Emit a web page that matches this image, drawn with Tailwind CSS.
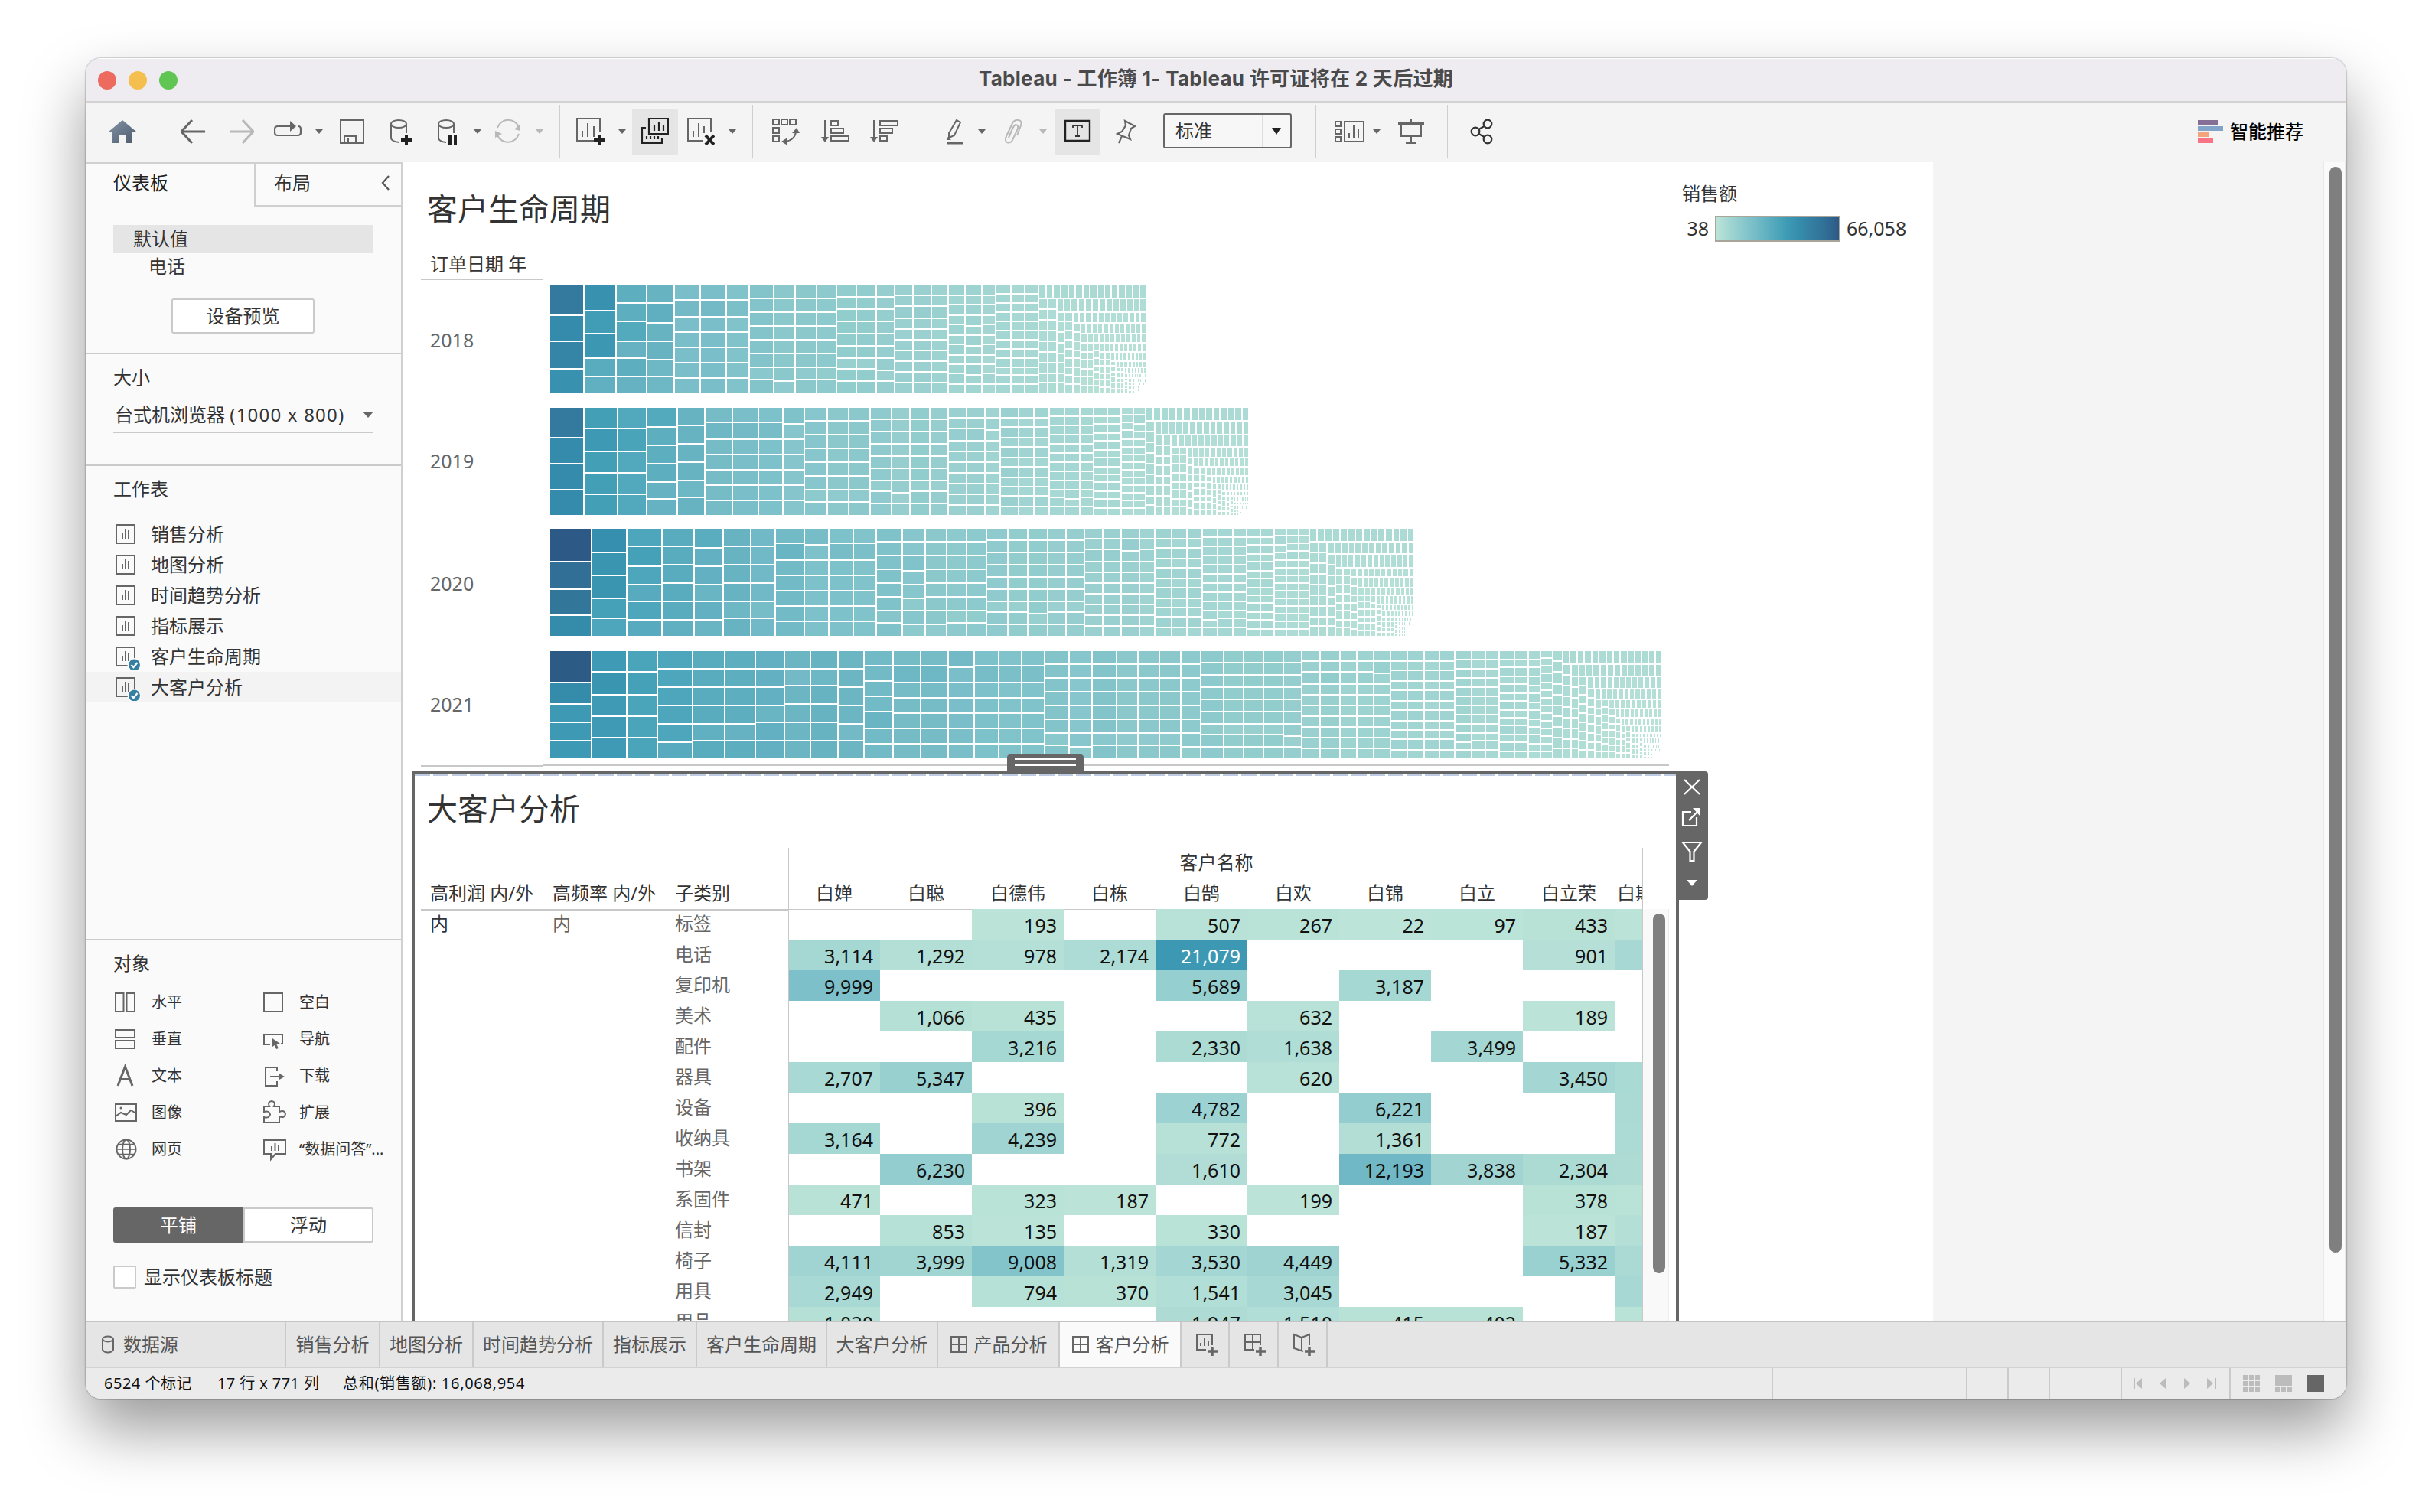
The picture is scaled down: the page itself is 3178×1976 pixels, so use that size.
<!DOCTYPE html>
<html lang="zh-CN">
<head>
<meta charset="utf-8">
<title>Tableau - 工作簿 1</title>
<script src="https://cdn.jsdelivr.net/npm/@tailwindcss/browser@4"></script>
</head>
<body class="bg-white w-[3178px] h-[1976px] overflow-hidden pt-[76px] pl-[112px] font-['Noto_Sans','Noto_Sans_CJK_SC',sans-serif] text-[24px] leading-[36px] text-[#333] whitespace-nowrap">
<div class="w-[2954px] h-[1752px] rounded-[20px] overflow-hidden flex flex-col bg-[#f4f4f4] shadow-[0_0_2px_rgba(0,0,0,0.6),0_40px_80px_rgba(0,0,0,0.4)]">

  <!-- Title bar -->
  <header class="h-[58px] shrink-0 bg-[#eeecf1] border-b-2 border-[#d2d2d2] border-t border-t-white flex items-center relative pl-4 gap-4">
    <span class="size-6 rounded-full bg-[#ec6a5e]"></span>
    <span class="size-6 rounded-full bg-[#f4bf4f]"></span>
    <span class="size-6 rounded-full bg-[#61c554]"></span>
    <h1 class="absolute inset-x-0 top-[8px] text-center font-bold text-[26px] tracking-[0.300px] text-[#4a4a4a] font-['Inter','Noto_Sans_CJK_SC',sans-serif]">Tableau - 工作簿 1- Tableau 许可证将在 2 天后过期</h1>
  </header>

  <!-- Toolbar -->
  <nav class="h-[78px] pb-[2px] shrink-0 flex items-center [&>svg]:shrink-0">
    <svg class="ml-[30px] w-[36px] h-[36px]" viewBox="142 154 36 36"><defs><linearGradient id="hm" x1="0" y1="0" x2="1" y2="1"><stop offset="0" stop-color="#8494a6"/><stop offset="1" stop-color="#4c5b6e"/></linearGradient></defs><path d="M160 157L178 172H173V187H164V176H156V187H147V172H142Z" fill="url(#hm)"/></svg>
    <i class="ml-[28px] w-px h-[70px] bg-[#cfcfcf]"></i>
    <svg class="ml-[29px] w-[32px] h-[36px]" viewBox="236 154 32 36"><path d="M251 157L237 172L251 187M237 172H268" fill="none" stroke="#666" stroke-width="3"/></svg>
    <svg class="ml-[32px] w-[32px] h-[36px]" viewBox="300 154 32 36"><path d="M317 157L331 172L317 187M331 172H300" fill="none" stroke="#b8b8b8" stroke-width="3"/></svg>
    <svg class="ml-[26px] w-[36px] h-[36px]" viewBox="358 154 36 36"><path d="M366 165H363Q359 165 359 169V173Q359 177 363 177H389Q393 177 393 173V169Q393 165 390 165M366 165H380" fill="none" stroke="#666" stroke-width="2.2"/><path d="M379 158L387 165L379 172Z" fill="#666"/></svg>
    <svg class="ml-[17px] w-[12px] h-[36px]" viewBox="0 0 12 36"><path d="M1 15H11L6 21Z" fill="#666"/></svg>
    <svg class="ml-[21px] w-[32px] h-[36px]" viewBox="444 154 32 36"><path d="M445 157H475V187H445ZM450 187V178H465V187M455 181V187" fill="none" stroke="#666" stroke-width="2"/></svg>
    <svg class="ml-[34px] w-[30px] h-[36px]" viewBox="510 154 30 36"><ellipse cx="521" cy="162" rx="10" ry="5" fill="none" stroke="#666" stroke-width="2"/><path d="M511 162V181Q512 185 522 186M531 162V174" fill="none" stroke="#666" stroke-width="2"/><path d="M531 176V190M524 183H539" stroke="#222" stroke-width="4"/></svg>
    <svg class="ml-[32px] w-[26px] h-[36px]" viewBox="572 154 26 36"><ellipse cx="583" cy="162" rx="10" ry="5" fill="none" stroke="#666" stroke-width="2"/><path d="M573 162V181Q574 185 583 186M593 162V174" fill="none" stroke="#666" stroke-width="2"/><path d="M588 177V190M595 177V190" stroke="#222" stroke-width="4"/></svg>
    <svg class="ml-[20px] w-[12px] h-[36px]" viewBox="0 0 12 36"><path d="M1 15H11L6 21Z" fill="#666"/></svg>
    <svg class="ml-[17px] w-[34px] h-[36px]" viewBox="647 154 34 36"><path d="M650 167A15 15 0 0 1 678 166M678 175A15 15 0 0 1 650 177" fill="none" stroke="#b8b8b8" stroke-width="2"/><path d="M680 162V171L672 169ZM647 180V171L656 175Z" fill="#b8b8b8"/></svg>
    <svg class="ml-[18px] w-[12px] h-[36px]" viewBox="0 0 12 36"><path d="M1 15H11L6 21Z" fill="#b8b8b8"/></svg>
    <i class="ml-[20px] w-px h-[70px] bg-[#cfcfcf]"></i>
    <svg class="ml-[21px] w-[38px] h-[36px]" viewBox="753 154 38 36"><path d="M776 184H754V155H784V173M761 179V171M768 179V161M776 179V165" fill="none" stroke="#666" stroke-width="2"/><path d="M783 176V190M776 183H790" stroke="#222" stroke-width="4"/></svg>
    <svg class="ml-[16px] w-[12px] h-[36px]" viewBox="0 0 12 36"><path d="M1 15H11L6 21Z" fill="#666"/></svg>
    <span class="ml-[7px] w-[60px] h-[60px] bg-[#e5e5e5] flex items-center justify-center shrink-0"><svg class="w-[36px] h-[36px]" viewBox="838 154 36 36"><path d="M848 155H873V175H848ZM855 171V164M861 171V159M867 171V163M844 167H839V187H865V180M845 182V178M850 182V178M855 182V178M860 182V178" fill="none" stroke="#222" stroke-width="2.2"/></svg></span>
    <svg class="ml-[12px] w-[36px] h-[36px]" viewBox="898 154 36 36"><path d="M918 184H899V155H929V172M906 179V171M913 179V161M920 174V165" fill="none" stroke="#666" stroke-width="2"/><path d="M922 177L933 189M933 177L922 189" stroke="#222" stroke-width="4"/></svg>
    <svg class="ml-[17px] w-[12px] h-[36px]" viewBox="0 0 12 36"><path d="M1 15H11L6 21Z" fill="#666"/></svg>
    <i class="ml-[20px] w-px h-[70px] bg-[#cfcfcf]"></i>
    <svg class="ml-[25px] w-[36px] h-[36px]" viewBox="1009 154 36 36"><path d="M1010 156H1018V163H1010ZM1021 156H1029V163H1021ZM1032 156H1040V163H1032ZM1010 167H1018V174H1010ZM1010 178H1018V185H1010ZM1026 185Q1039 183 1040 172" fill="none" stroke="#666" stroke-width="2"/><path d="M1035 174L1041 167L1045 174ZM1029 180V190L1021 185Z" fill="#666"/></svg>
    <svg class="ml-[28px] w-[38px] h-[36px]" viewBox="1073 154 38 36"><path d="M1078 157V180M1086 158H1095V164H1086ZM1086 168H1102V174H1086ZM1086 178H1109V184H1086Z" fill="none" stroke="#666" stroke-width="2"/><path d="M1073 179H1083L1078 186Z" fill="#666"/></svg>
    <svg class="ml-[26px] w-[38px] h-[36px]" viewBox="1137 154 38 36"><path d="M1142 157V180M1150 158H1173V164H1150ZM1150 168H1166V174H1150ZM1150 178H1159V184H1150Z" fill="none" stroke="#666" stroke-width="2"/><path d="M1137 179H1147L1142 186Z" fill="#666"/></svg>
    <i class="ml-[28px] w-px h-[70px] bg-[#cfcfcf]"></i>
    <svg class="ml-[32px] w-[24px] h-[36px]" viewBox="1236 154 24 36"><path d="M1250 157L1255 160L1247 177L1240 180V174Z" fill="none" stroke="#666" stroke-width="2"/><path d="M1237 187H1259" stroke="#666" stroke-width="3"/><path d="M1238 179L1243 183H1238Z" fill="#666"/></svg>
    <svg class="ml-[17px] w-[12px] h-[36px]" viewBox="0 0 12 36"><path d="M1 15H11L6 21Z" fill="#666"/></svg>
    <svg class="ml-[23px] w-[26px] h-[36px]" viewBox="1312 154 26 36"><path d="M1329 177L1334 164Q1336 158 1331 157Q1326 156 1323 161L1315 178Q1312 185 1317 186.500Q1322 187 1324 181L1330 168Q1331 163 1327 163Q1325 164 1323 168L1318 180" fill="none" stroke="#b8b8b8" stroke-width="2"/></svg>
    <svg class="ml-[19px] w-[12px] h-[36px]" viewBox="0 0 12 36"><path d="M1 15H11L6 21Z" fill="#b8b8b8"/></svg>
    <span class="ml-[9px] w-[60px] h-[60px] bg-[#e5e5e5] flex items-center justify-center shrink-0"><svg class="w-[36px] h-[36px]" viewBox="1390 154 36 36"><path d="M1392 158H1424V184H1392Z" fill="none" stroke="#222" stroke-width="2.4"/><path d="M1402 167V164H1414V167M1408 164V178M1405 178H1411" fill="none" stroke="#333" stroke-width="1.800"/></svg></span>
    <svg class="ml-[20px] w-[27px] h-[36px]" viewBox="1458 154 27 36"><path d="M1470 158L1483 165L1478 168L1475 177L1477 182L1460 175L1466 172L1471 164ZM1466 178L1462 187" fill="none" stroke="#666" stroke-width="2.200"/></svg>
    <button class="ml-[35px] w-[168px] h-[46px] mt-[-2px] border-2 border-[#666] rounded-[3px] bg-[#f7f7f7] flex items-center shrink-0 pl-[14px]"><span class="flex-1 text-left">标准</span><i class="w-px h-full bg-[#dedede]"></i><svg class="w-[36px] h-[36px]" viewBox="0 0 36 36"><path d="M12 14H24L18 23Z" fill="#222"/></svg></button>
    <i class="ml-[31px] w-px h-[70px] bg-[#cfcfcf]"></i>
    <svg class="ml-[24px] w-[39px] h-[36px]" viewBox="1744 154 39 36"><path d="M1745 159H1752V165H1745ZM1745 169H1752V175H1745ZM1745 179H1752V185H1745ZM1757 159H1782V185H1757ZM1763 180V174M1769 180V163M1775 180V168" fill="none" stroke="#666" stroke-width="2"/></svg>
    <svg class="ml-[10px] w-[12px] h-[36px]" viewBox="0 0 12 36"><path d="M1 15H11L6 21Z" fill="#666"/></svg>
    <svg class="ml-[21px] w-[36px] h-[36px]" viewBox="1826 154 36 36"><path d="M1844 156V160M1831 161V178H1857V161M1844 178V187M1837 187H1851" fill="none" stroke="#666" stroke-width="2"/><path d="M1827 161H1861" stroke="#666" stroke-width="4"/></svg>
    <i class="ml-[29px] w-px h-[70px] bg-[#cfcfcf]"></i>
    <svg class="ml-[29px] w-[30px] h-[36px]" viewBox="1921 154 30 36"><g fill="none" stroke="#333" stroke-width="2.200"><circle cx="1928" cy="172" r="5.300"/><circle cx="1944" cy="162" r="5.300"/><circle cx="1944" cy="182" r="5.300"/><path d="M1932.500 169L1939.500 165M1932.500 175L1939.500 179"/></g></svg>
    <svg class="ml-auto w-[33px] h-[30px]" viewBox="0 0 33 30"><path d="M0 0H26V6H0Z" fill="#866f96"/><path d="M0 8H33V14H0Z" fill="#82a4c9"/><path d="M0 16H14V22H0Z" fill="#f2a57a"/><path d="M0 24H20V30H0Z" fill="#f87383"/></svg>
    <span class="ml-[9px] mr-[56px] font-medium text-black">智能推荐</span>
  </nav>

  <!-- Workspace -->
  <main class="h-[1515px] shrink-0 flex overflow-hidden">
    <aside class="w-[414px] shrink-0 bg-[#fafafa] border-r-2 border-[#d0d0d0] border-t-2 flex flex-col">
      <div class="h-[56px] flex">
        <div class="w-[220px] pl-[36px] pt-[7px] text-[#222]">仪表板</div>
        <div class="flex-1 border-l-2 border-b-2 border-[#d0d0d0] pl-[24px] pt-[7px] pr-[3px] flex justify-between">布局<svg class="w-[36px] h-[36px]" viewBox="0 0 36 36"><path d="M23 9L15 18L23 27" fill="none" stroke="#555" stroke-width="2.200"/></svg></div>
      </div>
      <div class="mt-[24px] mx-[36px] h-[36px] bg-[#e5e5e5] pl-[26px]">默认值</div>
      <div class="h-[36px] pl-[82px]">电话</div>
      <button class="mt-[24px] ml-[112px] w-[187px] h-[46px] border-2 border-[#cacaca] rounded-[3px] bg-white leading-[40px]">设备预览</button>
      <section class="mt-[25px] border-t-2 border-[#cacaca] pt-[12px] px-[36px]">
        <h2>大小</h2>
        <div class="mt-[9px] h-[46px] border-b-2 border-[#cacaca] flex items-center justify-between pl-[2px]"><span>台式机浏览器 <span class="tracking-[1.200px]">(1000 x 800)</span></span><svg class="w-[14px] h-[8px]" viewBox="0 0 14 8"><path d="M0 0H14L7 8Z" fill="#666"/></svg></div>
      </section>
      <section class="mt-[41px] border-t-2 border-[#cacaca] pt-[12px]">
        <h2 class="pl-[36px]">工作表</h2>
        <ul id="sheets" class="mt-[21px]"></ul>
      </section>
      <section class="mt-[309px] border-t-2 border-[#cacaca] pt-[12px] px-[36px]">
        <h2>对象</h2>
        <div class="mt-[9px] grid grid-cols-[193px_1fr] auto-rows-[48px] text-[20px] items-center [&>div]:flex [&>div]:items-center [&>div]:gap-[14px] [&_svg]:w-[36px] [&_svg]:h-[36px] [&_svg]:shrink-0 [&_svg]:fill-none [&_svg]:stroke-[#666] [&_svg]:stroke-2">
          <div><svg viewBox="0 0 36 36"><rect x="3" y="6" width="10.500" height="24"/><rect x="17.500" y="6" width="10.500" height="24"/></svg>水平</div>
          <div><svg viewBox="0 0 36 36"><rect x="4" y="6" width="24" height="24"/></svg>空白</div>
          <div><svg viewBox="0 0 36 36"><rect x="3" y="6" width="25" height="10"/><rect x="3" y="20" width="25" height="10"/></svg>垂直</div>
          <div><svg viewBox="0 0 36 36"><path d="M12 25H4V12H28V24H26"/><path d="M15 17L25 24L20.500 25L23 30L20 31L18 26L15 28Z" fill="#666" stroke="none"/></svg>导航</div>
          <div><svg viewBox="0 0 36 36"><path d="M6 31L15.500 6L25 31M9 22.500H22" stroke-width="3"/></svg>文本</div>
          <div><svg viewBox="0 0 36 36"><path d="M21 12V7H6V31H21V25M12 19H26"/><path d="M24 15L31 19L24 23Z" fill="#666" stroke="none"/></svg>下载</div>
          <div><svg viewBox="0 0 36 36"><rect x="3" y="7" width="27" height="22"/><path d="M3 23L10 18L17 21L23 15L30 19"/><circle cx="10" cy="12" r="1.500" fill="#666" stroke="none"/></svg>图像</div>
          <div><svg viewBox="0 0 36 36"><path d="M4 17V10H11Q8 4 14 3Q20 4 17 10H24V17Q31 14 32 20Q31 26 24 23V31H4V24Q11 26 12 20.500Q11 15 4 17Z"/></svg>扩展</div>
          <div><svg viewBox="0 0 36 36"><circle cx="17" cy="18" r="12.500"/><ellipse cx="17" cy="18" rx="5" ry="12.500"/><path d="M4.500 18H29.500M7 11.500H27M7 24.500H27" stroke-width="1.700"/></svg>网页</div>
          <div><svg viewBox="0 0 36 36"><path d="M4 6H32V24H19L13 31V24H4ZM14 20V14M18.500 20V10M23 20V13"/></svg><span>“数据问答”...</span></div>
        </div>
        <div class="mt-[52px] h-[46px] w-[340px] flex text-center leading-[45px]">
          <span class="w-1/2 bg-[#666] text-white rounded-l-[3px]">平铺</span>
          <span class="w-1/2 border-2 border-[#cacaca] bg-white rounded-r-[3px] leading-[41px]">浮动</span>
        </div>
        <div class="mt-[30px] flex items-center gap-[10px] h-[30px]"><i class="size-[30px] border-2 border-[#cacaca] bg-white rounded-[2px]"></i>显示仪表板标题</div>
      </section>
    </aside>

    <!-- Dashboard canvas -->
    <div class="w-[2000px] shrink-0 bg-white flex flex-col">
      <div class="h-[796px] shrink-0 pl-[24px] flex">
        <section class="w-[1631px] pt-[31px]">
          <h2 class="h-[60px] leading-[60px] text-[40px] pl-[8px]">客户生命周期</h2>
          <div class="mt-[24px] h-[36px] pl-[12px]">订单日期 年</div>
          <div class="mt-px h-[2px] flex items-start"><i class="w-[160px] h-[2px] bg-[#c8c8c8]"></i><i class="flex-1 h-px bg-[#c8c8c8]"></i></div>
          <div class="text-[25px] text-[#666]">
            <div class="h-[160px] flex items-start"><span class="w-[169px] pl-[12px] mt-[60px]">2018</span><svg data-year="2018" class="mt-[7px] w-[1460px] h-[140px]"></svg></div>
            <div class="h-[158px] flex items-start"><span class="w-[169px] pl-[12px] mt-[58px]">2019</span><svg data-year="2019" class="mt-[7px] w-[1460px] h-[140px]"></svg></div>
            <div class="h-[160px] flex items-start"><span class="w-[169px] pl-[12px] mt-[60px]">2020</span><svg data-year="2020" class="mt-[7px] w-[1460px] h-[140px]"></svg></div>
            <div class="h-[155px] flex items-start"><span class="w-[169px] pl-[12px] mt-[58px]">2021</span><svg data-year="2021" class="mt-[7px] w-[1460px] h-[140px]"></svg></div>
          </div>
          <div class="h-[3px] flex"><i class="w-[160px] h-[2px] mt-px bg-[#c8c8c8]"></i><i class="flex-1 h-[2px] bg-[#c8c8c8]"></i></div>
        </section>
        <section class="pl-[17px] pt-[23px]">
          <h3>销售额</h3>
          <div class="mt-[9px] flex items-center text-[25px]"><span class="w-[35px] text-right">38</span><i class="ml-[8px] mr-[8px] mt-px w-[164px] h-[34px] border-2 border-[#a9a59a] bg-[linear-gradient(90deg,#bce4d8,#a1d5d2,#89c8cc,#72bac6,#59acbe,#419eb6,#358ead,#347ea1,#316f96,#2c5985)]"></i>66,058</div>
        </section>
      </div>

      <!-- Selected zone -->
      <section class="relative ml-[12px] w-[1656px] h-[760px] shrink-0 border-4 border-b-0 border-[#666]">
        <div class="h-[2px] bg-[repeating-linear-gradient(90deg,#bfcbe3_0_20px,transparent_20px_24px)]"></div>
        <h2 class="mt-[13px] h-[61px] leading-[60px] text-[40px] pl-[16px]">大客户分析</h2>
        <div class="mt-[20px] pl-[8px] flex">
          <div class="w-[480px] shrink-0">
            <div class="h-[82px] border-b-2 border-[#c8c8c8] grid grid-cols-3 items-start pt-[41px] [&>span]:pl-[12px]"><span>高利润 内/外</span><span>高频率 内/外</span><span>子类别</span></div>
            <div id="labels" class="text-[#666] mt-[-1px]"></div>
          </div>
          <div class="w-[1117px] shrink-0 overflow-hidden border-x border-[#c8c8c8]">
            <div class="h-[81px] border-b border-[#c8c8c8] w-[1117px] pt-px">
              <div class="h-[40px] text-center leading-[36px]">客户名称</div>
              <div id="names" class="grid grid-cols-[repeat(10,120px)] text-center"></div>
            </div>
            <div id="cells" class="grid grid-cols-[repeat(10,120px)] auto-rows-[40px] mt-[-1px] ml-[-1px] text-[25px] text-[#111] text-right leading-[42px]"></div>
          </div>
          <div class="mt-[80px] w-[34px] h-[560px] bg-[#f9f9f9] border-r-2 border-[#ececec] pt-[6px] pl-[13px]"><div class="w-[16px] h-[470px] rounded-full bg-[#7f7f7f]"></div></div>
        </div>
        <div class="absolute left-[774px] top-[-26px] w-[100px] h-[22px] bg-[#666] rounded-t-[4px] flex flex-col items-center gap-[6px] pt-[5px]"><i class="w-[80px] h-[2px] bg-white"></i><i class="w-[80px] h-[2px] bg-white"></i></div>
        <svg class="absolute left-[1648px] top-[-4px] w-[42px] h-[168px] bg-[#666] rounded-r-[4px]" viewBox="2190 1008 42 168"><g fill="none" stroke="#fff" stroke-width="2.200"><path d="M2201 1019L2221 1038M2221 1019L2201 1038"/><path d="M2210 1061H2199V1079H2217V1068M2207 1072L2219 1060"/><path d="M2199 1101H2223L2213.500 1113V1125H2208.500V1113Z"/></g><path d="M2212 1056H2222V1067ZM2204 1150H2218L2211 1158Z" fill="#fff"/></svg>
      </section>
    </div>
    <div class="flex-1"></div>
    <div class="w-[31px] shrink-0 bg-[#fafafa] border-l-2 border-[#e8e8e8] border-r-2 pt-[6px] pl-[7px]"><div class="w-[16px] h-[1419px] rounded-full bg-[#7f7f7f]"></div></div>
  </main>

  <!-- Sheet tabs -->
  <div class="h-[61px] shrink-0 bg-[#e5e5e5] border-t border-[#c4c4c4] border-b-2 border-b-[#d2d2d2] flex text-[#555] leading-[58px] [&>div]:border-r-2 [&>div]:border-[#cacaca] [&>div]:flex [&>div]:items-center [&>div]:justify-center [&>div]:shrink-0">
    <div class="w-[262px] pr-[120px]"><svg class="w-[16px] h-[24px] mr-[12px] ml-[2px]" viewBox="0 0 16 24"><path d="M1 5V19Q3 22.500 8 22.500T15 19V5" fill="none" stroke="#666" stroke-width="2"/><ellipse cx="8" cy="5" rx="7" ry="3.500" fill="none" stroke="#666" stroke-width="2"/></svg>数据源</div>
    <div class="w-[123px]">销售分析</div>
    <div class="w-[122px]">地图分析</div>
    <div class="w-[170px]">时间趋势分析</div>
    <div class="w-[122px]">指标展示</div>
    <div class="w-[170px]">客户生命周期</div>
    <div class="w-[145px]">大客户分析</div>
    <div class="w-[159px]"><svg class="w-[24px] h-[24px] mr-[8px]" viewBox="0 0 24 24"><path d="M2 2H22V22H2ZM12 2V22M2 12H22" fill="none" stroke="#666" stroke-width="2"/></svg>产品分析</div>
    <div class="w-[159px] bg-[#fafafa]"><svg class="w-[24px] h-[24px] mr-[8px]" viewBox="0 0 24 24"><path d="M2 2H22V22H2ZM12 2V22M2 12H22" fill="none" stroke="#666" stroke-width="2"/></svg>客户分析</div>
    <div class="w-[63px] pl-[4px]"><svg class="w-[30px] h-[30px]" viewBox="0 0 30 30"><path d="M14 22H2V2H22V16M7 17V13M12 17V7M17 17V10" fill="none" stroke="#666" stroke-width="2"/><path d="M22 18V30M16 24H29" stroke="#666" stroke-width="3.500"/></svg></div>
    <div class="w-[64px] pl-[4px]"><svg class="w-[30px] h-[30px]" viewBox="0 0 30 30"><path d="M14 22H2V2H22V16M12 2V22M2 12H22" fill="none" stroke="#666" stroke-width="2"/><path d="M22 18V30M16 24H29" stroke="#666" stroke-width="3.500"/></svg></div>
    <div class="w-[64px] pl-[4px]"><svg class="w-[30px] h-[30px]" viewBox="0 0 30 30"><path d="M14 24L2 20V2L12 6L22 2V16M12 6V23" fill="none" stroke="#666" stroke-width="2"/><path d="M22 18V30M16 24H29" stroke="#666" stroke-width="3.500"/></svg></div>
  </div>

  <!-- Status bar -->
  <footer class="h-[40px] shrink-0 bg-[#ebebeb] flex items-center text-[20px] text-[#111] pl-[24px] leading-[40px] [&>i]:h-full [&>i]:border-l-2 [&>i]:border-[#cacaca] [&>i]:shrink-0">
    <span class="w-[148px] tracking-[0.500px]">6524 个标记</span><span class="w-[164px] tracking-[0.400px]">17 行 x 771 列</span><span class="flex-1 tracking-[0.700px]">总和(销售额): 16,068,954</span>
    <i class="w-[254px]"></i><i class="w-[54px]"></i><i class="w-[54px]"></i><i class="w-[94px]"></i>
    <i class="w-[142px] flex items-center"><svg class="w-[140px] h-[40px]" viewBox="2773 0 140 40"><path d="M2799 13V27L2791 20ZM2830 13V27L2822 20ZM2854 13V27L2862 20ZM2884 13V27L2892 20ZM2788 13H2790V27H2788ZM2894 13H2896V27H2894Z" fill="#bcbcbc"/></svg></i>
    <i class="w-[153px]"><svg class="w-[151px] h-[40px]" viewBox="2915 0 151 40"><path d="M2931 9h6v6h-6zM2939 9h6v6h-6zM2947 9h6v6h-6zM2931 17h6v6h-6zM2939 17h6v6h-6zM2947 17h6v6h-6zM2931 25h6v6h-6zM2939 25h6v6h-6zM2947 25h6v6h-6zM2973 9h22v14h-22zM2973 25h6v6h-6zM2981 25h6v6h-6zM2989 25h6v6h-6z" fill="#bcbcbc"/><path d="M3015 9h22v22h-22z" fill="#666"/></svg></i>
  </footer>
</div>

<script>
const palette = ['bce4d8','aedcd5','a1d5d2','95cecf','89c8cc','7ec1ca','72bac6','66b2c2','59acbe','4ba5ba','419eb6','3b96b2','358ead','3586a7','347ea1','32779b','316f96','2f6790','2d608a','2c5985']
  .map(h => [0,2,4].map(i => parseInt(h.substr(i,2),16)));
function shade(t) {
  t = Math.max(0, Math.min(18.999, t));
  const i = Math.floor(t), f = t - i;
  return 'rgb(' + palette[i].map((c,k) => Math.round(c + (palette[i+1][k]-c)*f)).join(',') + ')';
}

// Each year: [left edge, row count or explicit row edges] per column, then the tail box.
const years = {
  2018: {cols:[[0,[0,40,74,110]],[45,[0,34,64,96,120]],[87,[0,24,48,74,96,120]],[127,[0,24,50,74,98,120]],[163,7],[197,7],[231,7],[261,8],[293,8],[321,8],[349,8],[375,9],[401,9],[427,9],[451,10],[475,10],[499,10],[521,11],[543,11],[565,11],[583,12],[603,12],[621,12]], tail:639, end:779},
  2019: {cols:[[0,[0,40,74,108]],[45,5],[89,5],[127,[0,26,50,74,98,120]],[167,6],[203,7],[239,7],[273,7],[305,7],[333,8],[363,8],[391,8],[419,9],[447,9],[471,9],[497,9],[521,10],[545,10],[569,10],[589,11],[613,11],[633,11],[653,12],[673,12],[693,12],[711,13],[729,13],[747,14],[763,14]], tail:779, end:913},
  2020: {cols:[[0,[0,44,80,114]],[55,[0,32,62,92,118]],[101,[0,24,50,74,96,120]],[147,6],[189,[0,26,50,74,96,120]],[227,6],[263,6],[295,7],[333,7],[365,[0,20,42,62,82,102,122]],[397,7],[427,8],[461,[0,18,36,56,74,92,108,126]],[491,8],[519,8],[545,8],[571,9],[599,9],[625,9],[651,9],[675,9],[699,10],[723,10],[747,10],[771,10],[791,11],[813,11],[833,11],[853,12],[873,12],[893,12],[911,13],[929,13],[947,14],[963,14],[979,14]], tail:993, end:1129},
  2021: {cols:[[0,[0,42,70,94,118]],[55,5],[101,5],[141,6],[187,6],[229,6],[269,[0,24,48,72,94,118]],[307,[0,24,46,70,94,118]],[341,[0,24,46,70,94,118]],[377,6],[411,[0,20,40,60,80,102,122]],[449,7],[485,7],[521,7],[555,7],[587,7],[617,7],[647,8],[679,8],[709,8],[741,8],[769,8],[797,8],[825,8],[851,9],[881,9],[907,9],[933,9],[959,9],[983,10],[1007,10],[1033,10],[1055,10],[1077,10],[1099,11],[1121,11],[1143,11],[1163,11],[1183,12],[1205,12],[1223,12],[1241,13],[1261,13],[1279,13],[1295,14]], tail:1311, end:1453}
};

// Squarified layout; horizontal strips prefer tall, narrow cells.
function squarify(values, x, y, w, h, out) {
  let i = 0;
  while (i < values.length && w > 0.5 && h > 0.5) {
    const across = w <= h, side = across ? w : h, stretch = across ? 1.9 : 0.85;
    let sum = 0, best = Infinity, j = i;
    while (j < values.length) {
      const s = sum + values[j], thick = s / side;
      const a = stretch*values[i]/(thick*thick), b = stretch*values[j]/(thick*thick);
      const worst = Math.max(a, 1/b);
      if (worst > best) break;
      best = worst; sum = s; j++;
    }
    const thick = sum / side;
    let p = 0;
    for (let k = i; k < j; k++) {
      const len = values[k] / thick;
      out.push(across ? [x+p, y, len, thick] : [x, y+p, thick, len]);
      p += len;
    }
    if (across) { y += thick; h -= thick; } else { x += thick; w -= thick; }
    i = j;
  }
}

for (const svg of document.querySelectorAll('svg[data-year]')) {
  const {cols, tail, end} = years[svg.dataset.year];
  const boxes = [];
  cols.forEach(([x, rows], c) => {
    const w = (cols[c+1] ? cols[c+1][0] : tail) - x;
    let edges = rows;
    if (typeof rows === 'number') {
      const bend = c % 5 === 3 ? 0.05 : 0.02;
      edges = [];
      for (let r = 0; r < rows; r++) {
        const t = r / rows;
        edges.push(Math.round((t + bend*t*(1-t)) * 142 / 2) * 2);
      }
    }
    edges.forEach((y, r) => boxes.push([x, y, w, (r+1 < edges.length ? edges[r+1] : 142) - y]));
  });
  const tw = end + 1 - tail, n = Math.round(2.25 * tw * 142 / 185);
  let values = Array.from({length:n}, (_, i) => Math.pow(1 - i/n, 1.25) + 0.003);
  const total = values.reduce((a,b) => a+b);
  values = values.map(v => v * tw * 142 / total);
  squarify(values, tail, 0, tw, 142, boxes);
  let s = '';
  for (const [x,y,w,h] of boxes) {
    const x0 = Math.round(x), y0 = Math.round(y/2)*2;
    const W = Math.round(x+w) - x0 - 2, H = Math.round((y+h)/2)*2 - y0 - 2;
    if (W <= 0 || H <= 0) continue;
    s += `<rect x="${x0}" y="${y0}" width="${W}" height="${H}" fill="${shade(w*h/122 - 0.2)}" shape-rendering="crispEdges"/>`;
  }
  svg.innerHTML = s;
}

// Worksheet list
const sheets = ['销售分析','地图分析','时间趋势分析','指标展示','客户生命周期','大客户分析'];
document.getElementById('sheets').innerHTML = sheets.map((t,i) => `
  <li class="h-[40px] pl-[38px] flex items-center ${i===5?'bg-[#f3f3f3]':''}"><svg class="w-[34px] h-[36px] mr-[13px]" viewBox="0 0 34 36"><path d="M2 6H26V30H2ZM10 24V17M14 24V11M18 24V13" fill="none" stroke="#666" stroke-width="2"/>${i>3?'<circle cx="25.500" cy="29" r="9" fill="#fafafa"/><circle cx="25.500" cy="29" r="7.500" fill="#357fa3"/><path d="M21.500 29L24.500 32L29.500 26" fill="none" stroke="#fff" stroke-width="2.200"/>':''}</svg>${t}</li>`).join('');

// Crosstab
const names = ['白婵','白聪','白德伟','白栋','白鹄','白欢','白锦','白立','白立荣','白斯'];
document.getElementById('names').innerHTML = names.map((n,i) => `<span class="${i===9?'text-left pl-[2px]':'pr-[2px]'}">${n}</span>`).join('');
const data = [
  ['标签',0,0,193,0,507,267,22,97,433,200],
  ['电话',3114,1292,978,2174,21079,0,0,0,901,3100],
  ['复印机',9999,0,0,0,5689,0,3187,0,0,0],
  ['美术',0,1066,435,0,0,632,0,0,189,0],
  ['配件',0,0,3216,0,2330,1638,0,3499,0,0],
  ['器具',2707,5347,0,0,0,620,0,0,3450,2600],
  ['设备',0,0,396,0,4782,0,6221,0,0,2500],
  ['收纳具',3164,0,4239,0,772,0,1361,0,0,2200],
  ['书架',0,6230,0,0,1610,0,12193,3838,2304,2000],
  ['系固件',471,0,323,187,0,199,0,0,378,300],
  ['信封',0,853,135,0,330,0,0,0,187,1300],
  ['椅子',4111,3999,9008,1319,3530,4449,0,0,5332,2500],
  ['用具',2949,0,794,370,1541,3045,0,0,0,3100],
  ['用品',1030,0,0,0,1947,1510,415,402,0,250]
];
document.getElementById('labels').innerHTML = data.map((r,i) => `<div class="h-[40px] grid grid-cols-3 [&>span]:pl-[12px]"><span class="text-[#333]">${i?'':'内'}</span><span>${i?'':'内'}</span><span>${r[0]}</span></div>`).join('');
document.getElementById('cells').innerHTML = data.map(r => r.slice(1).map((v,c) => v
  ? `<span class="pr-[9px] ${v>20000?'text-white':''}" style="background:${shade(v/1970)}">${c<9?v.toLocaleString('en-US'):''}</span>`
  : '<span></span>').join('')).join('');
</script>
</body>
</html>
